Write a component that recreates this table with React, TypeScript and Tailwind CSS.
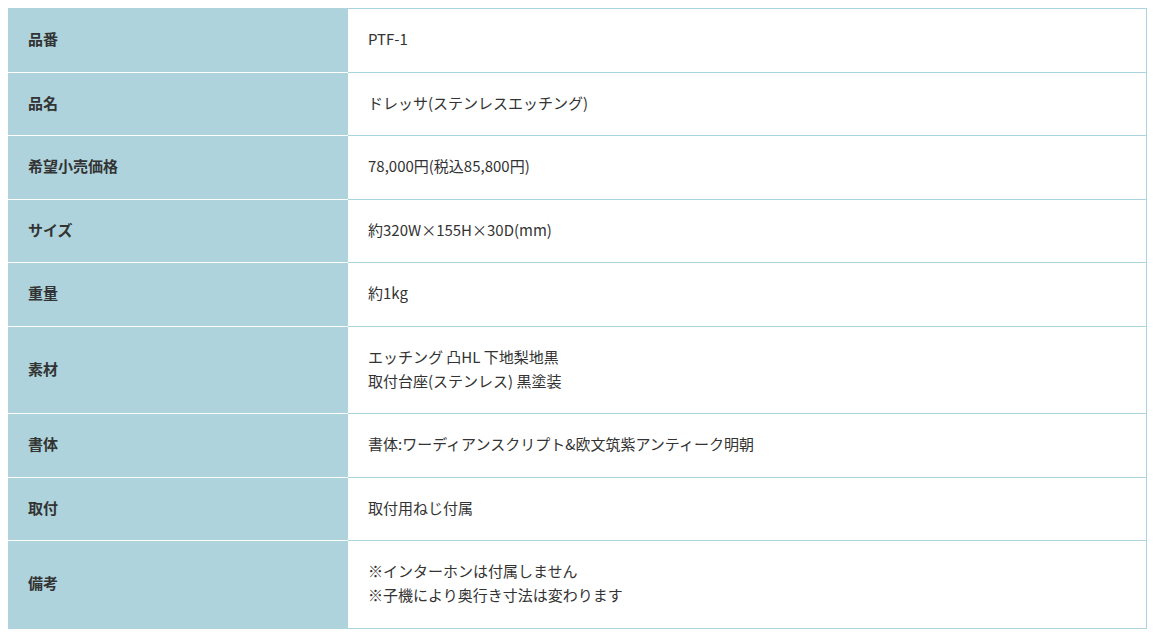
import React from "react";

const rows: [string, string[]][] = [
  ["品番", ["PTF-1"]],
  ["品名", ["ドレッサ(ステンレスエッチング)"]],
  ["希望小売価格", ["78,000円(税込85,800円)"]],
  ["サイズ", ["約320W×155H×30D(mm)"]],
  ["重量", ["約1kg"]],
  ["素材", ["エッチング 凸HL 下地梨地黒", "取付台座(ステンレス) 黒塗装"]],
  ["書体", ["書体:ワーディアンスクリプト&欧文筑紫アンティーク明朝"]],
  ["取付", ["取付用ねじ付属"]],
  ["備考", ["※インターホンは付属しません", "※子機により奥行き寸法は変わります"]],
];

export default function App() {
  return (
    <div
      className="bg-white p-2 text-[15px] text-[#333]"
      style={{ fontFamily: '"Noto Sans CJK JP", "Noto Sans", sans-serif' }}
    >
      <div className="flex flex-col">
        {rows.map(([label, lines], i) => (
          <div key={label} className="flex">
            <div
              className={`w-[340px] shrink-0 bg-[#aed3dc] px-5 pt-[18px] pb-[21px] font-bold leading-[23.6px] flex items-center ${
                i < rows.length - 1 ? "border-b border-white" : "border-b border-[#aed3dc]"
              }`}
            >
              {label}
            </div>
            <div
              className={`flex-1 border-b border-r border-[#aad5dc] px-5 pt-[18px] pb-[21px] leading-[23.6px] flex flex-col justify-center ${
                i === 0 ? "border-t" : ""
              }`}
            >
              {lines.map((l) => (
                <div key={l}>{l}</div>
              ))}
            </div>
          </div>
        ))}
      </div>
    </div>
  );
}
